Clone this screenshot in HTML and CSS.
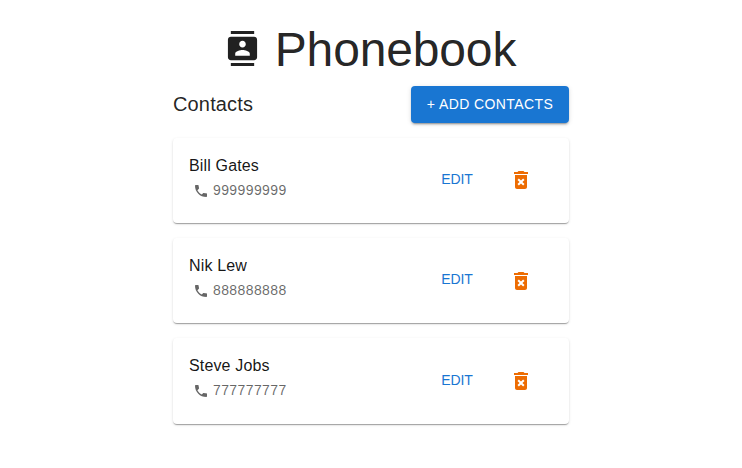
FILE: index.html
```html
<!DOCTYPE html>
<html lang="en">
<head>
<meta charset="utf-8">
<title>Phonebook</title>
<link rel="stylesheet" href="styles.css">
</head>
<body>
<svg width="0" height="0" class="defs">
  <symbol id="phone" viewBox="0 0 24 24"><path d="M6.62 10.79c1.44 2.83 3.76 5.14 6.59 6.59l2.2-2.2c.27-.27.67-.36 1.02-.24 1.12.37 2.33.57 3.57.57.55 0 1 .45 1 1V20c0 .55-.45 1-1 1-9.39 0-17-7.61-17-17 0-.55.45-1 1-1h3.5c.55 0 1 .45 1 1 0 1.25.2 2.45.57 3.57.11.35.03.74-.25 1.02l-2.2 2.2z"/></symbol>
  <symbol id="trash" viewBox="0 0 24 24"><path d="M6 19c0 1.100.9 2 2 2h8c1.100 0 2-.9 2-2V7H6v12zm2.460-7.120 1.410-1.410L12 12.590l2.120-2.120 1.410 1.410L13.410 14l2.120 2.120-1.410 1.410L12 15.410l-2.120 2.120-1.410-1.410L10.590 14l-2.130-2.120zM15.500 4l-1-1h-5l-1 1H5v2h14V4z"/></symbol>
</svg>
<main class="container">
  <h1 class="title">
    <svg class="title-icon" viewBox="0 0 24 24"><path d="M20 0H4v2h16V0zM4 24h16v-2H4v2zM20 4H4c-1.100 0-2 .9-2 2v12c0 1.100.9 2 2 2h16c1.100 0 2-.9 2-2V6c0-1.100-.9-2-2-2zm-8 2.750c1.240 0 2.250 1.010 2.250 2.250s-1.010 2.250-2.250 2.250S9.750 10.240 9.750 9 10.760 6.750 12 6.750zM17 17H7v-1.500c0-1.670 3.330-2.500 5-2.500s5 .83 5 2.500V17z"/></svg>
    <span>Phonebook</span>
  </h1>
  <div class="toolbar">
    <h2 class="subtitle">Contacts</h2>
    <button class="add">+ Add contacts</button>
  </div>
  <ul class="list">
    <li class="card">
      <div class="info"><div class="name">Bill Gates</div><div class="phone"><svg><use href="#phone"/></svg><span>999999999</span></div></div>
      <button class="edit">Edit</button>
      <button class="delete" aria-label="Delete"><svg><use href="#trash"/></svg></button>
    </li>
    <li class="card">
      <div class="info"><div class="name">Nik Lew</div><div class="phone"><svg><use href="#phone"/></svg><span>888888888</span></div></div>
      <button class="edit">Edit</button>
      <button class="delete" aria-label="Delete"><svg><use href="#trash"/></svg></button>
    </li>
    <li class="card">
      <div class="info"><div class="name">Steve Jobs</div><div class="phone"><svg><use href="#phone"/></svg><span>777777777</span></div></div>
      <button class="edit">Edit</button>
      <button class="delete" aria-label="Delete"><svg><use href="#trash"/></svg></button>
    </li>
  </ul>
</main>
</body>
</html>
```
FILE: styles.css
```css
* { box-sizing: border-box; }
body { margin: 0; min-height: 100vh; background: #fff; color: rgba(0,0,0,.87); font-family: "Liberation Sans", Arial, sans-serif; }
svg { fill: currentColor; flex: none; }
.defs { display: none; }
.container { width: 396px; margin: 0 auto; padding: 21px 0 40px; }
.title { display: flex; align-items: center; justify-content: center; gap: 15px; margin: 0; font-size: 48px; line-height: 56px; font-weight: 400; height: 56px; letter-spacing: -.15px; }
.title span { padding-top: 1px; }
.title-icon { width: 35px; height: 35px; margin: 0 0 1px -1px; }
.toolbar { display: flex; justify-content: space-between; align-items: center; height: 37px; margin-top: 9px; }
.subtitle { margin: 0; padding-bottom: 2px; font-size: 20px; line-height: 32px; font-weight: 400; letter-spacing: .15px; }
button { font-family: inherit; border: 0; background: none; text-transform: uppercase; padding: 0; }
.add { width: 158px; height: 37px; padding-bottom: 2px; border-radius: 4px; background: #1976d2; color: #fff; font-size: 14px; letter-spacing: .4px; white-space: nowrap; box-shadow: 0 3px 1px -2px rgba(0,0,0,.2), 0 2px 2px rgba(0,0,0,.14), 0 1px 5px rgba(0,0,0,.12); }
.list { list-style: none; margin: 15.1px 0 0; padding: 0; display: grid; gap: 14.95px; }
.card { display: flex; height: 85.2px; padding: 16px; border-radius: 4px; background: #fff; box-shadow: 0 2px 1px -1px rgba(0,0,0,.2), 0 1px 1px rgba(0,0,0,.14), 0 1px 3px rgba(0,0,0,.12); }
.card:last-child { height: 86px; }
.info { flex: 1; }
.name { font-size: 16px; line-height: 24px; letter-spacing: .15px; color: rgba(0,0,0,.92); }
.phone { display: flex; align-items: center; gap: 4px; padding-left: 4px; height: 25px; font-size: 14px; letter-spacing: .4px; color: rgba(0,0,0,.6); }
.phone span { padding-bottom: 2px; }
.phone svg { width: 16px; height: 16px; }
.edit { width: 64px; height: 50.4px; color: #1976d2; font-size: 14px; letter-spacing: -.15px; }
.delete { display: flex; align-items: center; justify-content: center; width: 64px; height: 52.7px; color: #ed6c02; }
.delete svg { width: 24px; height: 24px; }
```
